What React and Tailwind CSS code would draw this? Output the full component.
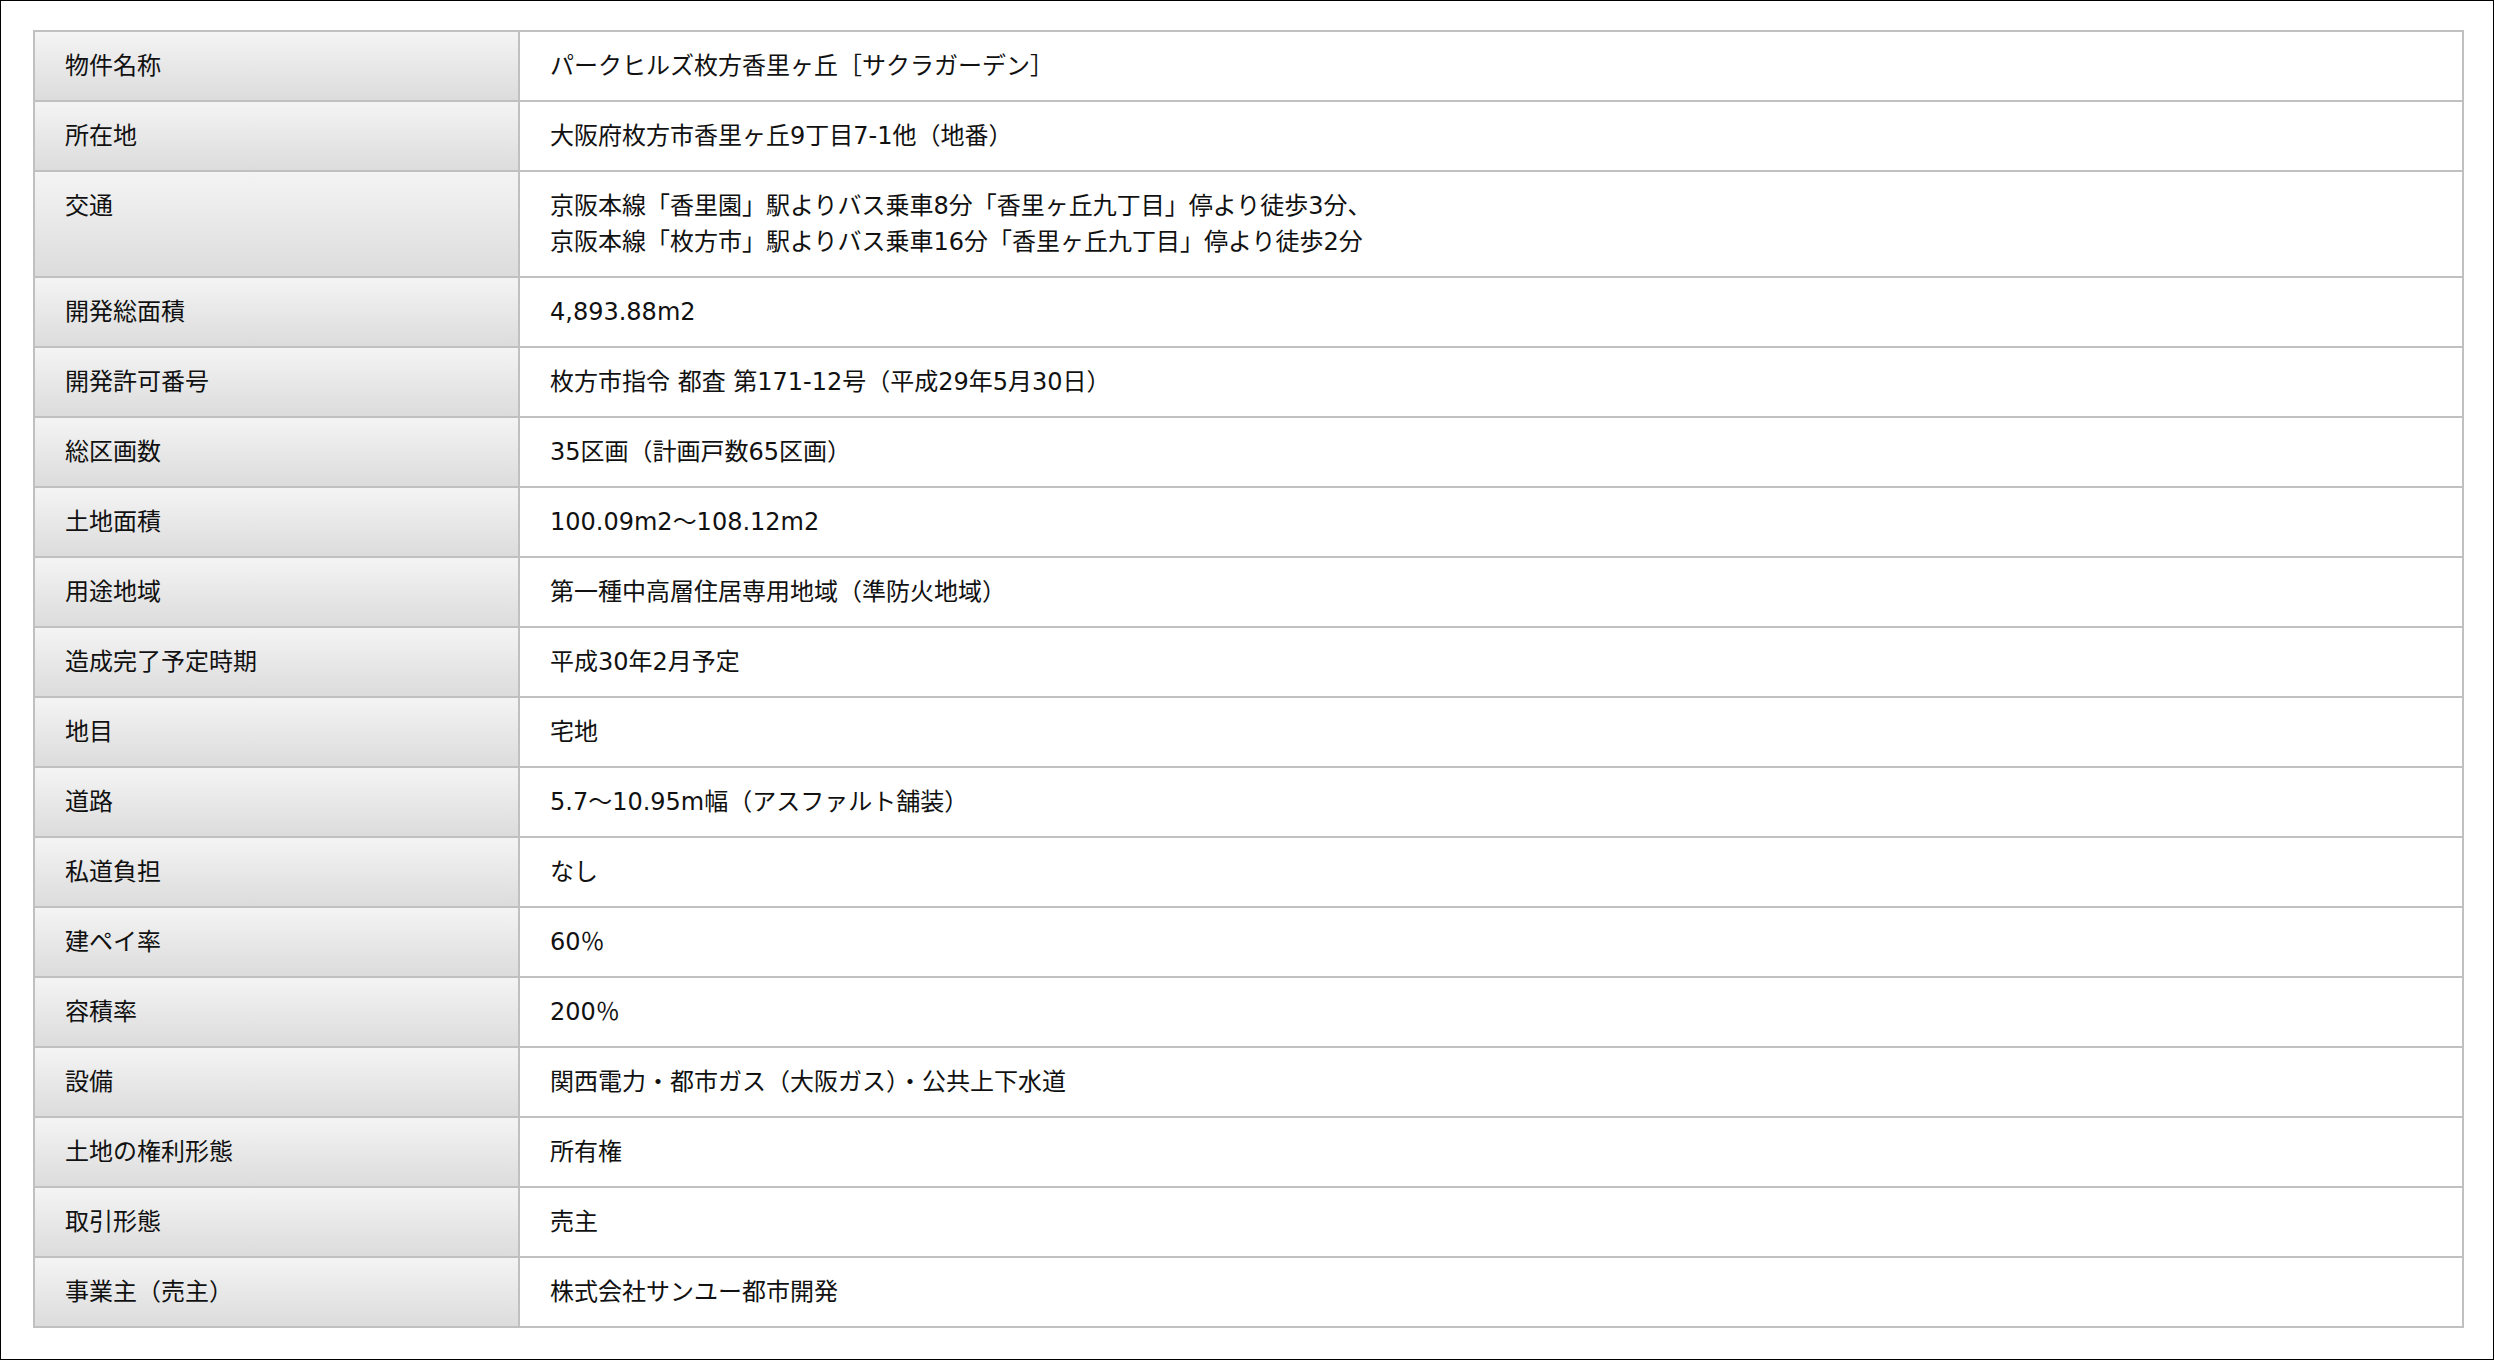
const rows = [
  ["物件名称", ["パークヒルズ枚方香里ヶ丘［サクラガーデン］"]],
  ["所在地", ["大阪府枚方市香里ヶ丘9丁目7-1他（地番）"]],
  [
    "交通",
    [
      "京阪本線「香里園」駅よりバス乗車8分「香里ヶ丘九丁目」停より徒歩3分、",
      "京阪本線「枚方市」駅よりバス乗車16分「香里ヶ丘九丁目」停より徒歩2分",
    ],
  ],
  ["開発総面積", ["4,893.88m2"]],
  ["開発許可番号", ["枚方市指令 都査 第171-12号（平成29年5月30日）"]],
  ["総区画数", ["35区画（計画戸数65区画）"]],
  ["土地面積", ["100.09m2〜108.12m2"]],
  ["用途地域", ["第一種中高層住居専用地域（準防火地域）"]],
  ["造成完了予定時期", ["平成30年2月予定"]],
  ["地目", ["宅地"]],
  ["道路", ["5.7〜10.95m幅（アスファルト舗装）"]],
  ["私道負担", ["なし"]],
  ["建ペイ率", ["60％"]],
  ["容積率", ["200％"]],
  ["設備", ["関西電力・都市ガス（大阪ガス）・公共上下水道"]],
  ["土地の権利形態", ["所有権"]],
  ["取引形態", ["売主"]],
  ["事業主（売主）", ["株式会社サンユー都市開発"]],
];

export default function App() {
  return (
    <div
      className="w-[2494px] h-[1360px] border border-black bg-white pl-[32px] pt-[29px] text-[24px] leading-[36px] text-[#111]"
      style={{ fontFamily: '"DejaVu Sans", "Noto Sans CJK JP", sans-serif' }}
    >
      <div className="w-[2431px] border-t-2 border-l-2 border-[#c0c0c0]">
        {rows.map(([label, lines]) => (
          <div key={label} className="flex border-b-2 border-[#c0c0c0]">
            {/* label cell */}
            <div className="w-[485px] shrink-0 border-r-2 border-[#c0c0c0] bg-linear-to-b from-[#f4f4f4] to-[#dcdcdc] pl-[30px] py-[16px]">
              {label}
            </div>
            {/* value cell */}
            <div className="flex-1 border-r-2 border-[#c0c0c0] bg-white pl-[30px] py-[16px]">
              {lines.map((t) => (
                <div key={t}>{t}</div>
              ))}
            </div>
          </div>
        ))}
      </div>
    </div>
  );
}
